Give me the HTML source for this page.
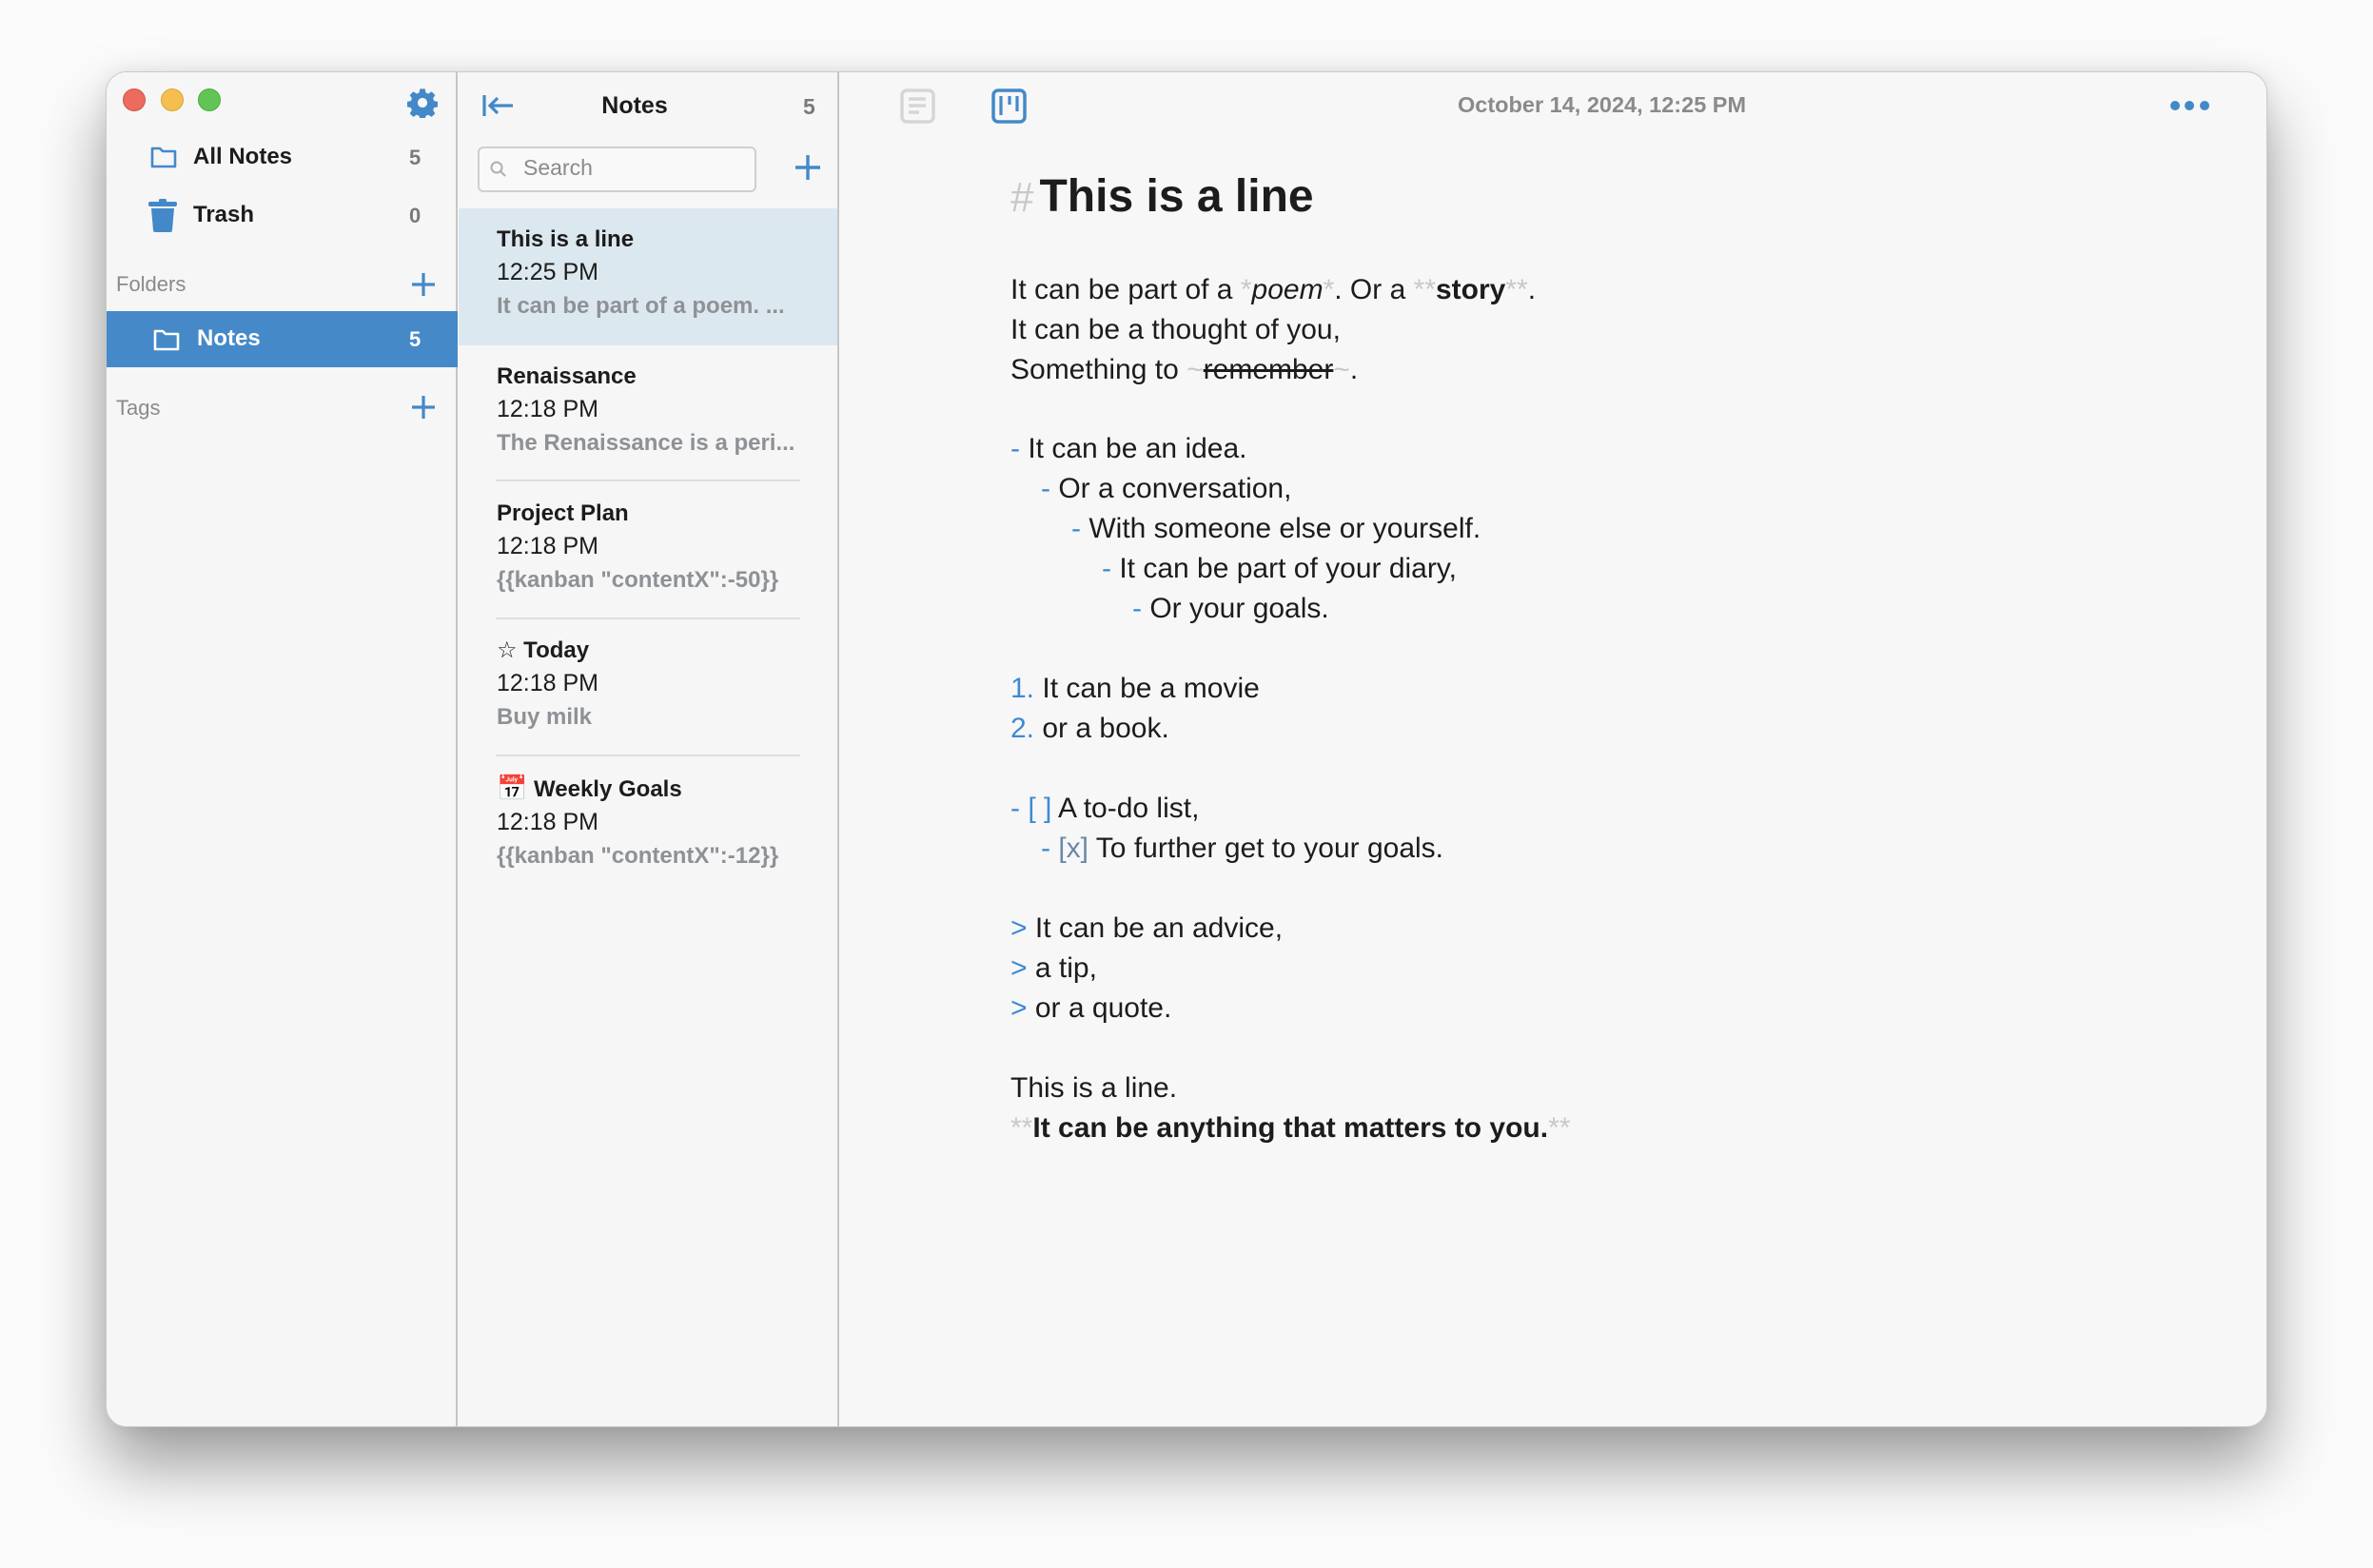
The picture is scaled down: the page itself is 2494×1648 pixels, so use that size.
<!DOCTYPE html>
<html><head><meta charset="utf-8">
<style>
*{margin:0;padding:0;box-sizing:border-box}
html,body{width:2494px;height:1648px;background:#fbfbfb;overflow:hidden;font-family:"Liberation Sans","DejaVu Sans",sans-serif}
.win{position:absolute;left:111px;top:75px;width:2272px;height:1425px;background:#f7f7f7;border-radius:22px;border:1px solid #c9c9c9;box-shadow:0 40px 70px rgba(0,0,0,.38),0 0 20px rgba(0,0,0,.08);overflow:hidden}
.abs{position:absolute;white-space:nowrap}
.side{position:absolute;left:0;top:0;width:369px;height:100%;background:#f6f6f6;border-right:2px solid #c6c6c6}
.list{position:absolute;left:370px;top:0;width:400px;height:100%;background:#f6f6f6;border-right:2px solid #c6c6c6}
.tl{position:absolute;top:17px;width:24px;height:24px;border-radius:50%}
.b{font-weight:bold}
.cnt{color:#7a7a7a;font-weight:bold;font-size:22px}
.it{position:absolute;left:40px;font-size:24px;line-height:35px;white-space:nowrap}
.it .t{font-weight:bold;color:#1c1c1c}
.it .tm{color:#1c1c1c;font-size:25px}
.it .p{color:#8e9196;font-weight:bold}
.sep{position:absolute;left:39px;width:320px;height:2px;background:#dedede}
.ed{position:absolute;left:950px;font-size:30px;color:#1c1c1c;white-space:nowrap;line-height:42px}
.bl{color:#3d8ad3}
.g{color:#c8c8c8}
</style></head><body>
<div class="win">
 <div class="side">
  <div class="tl" style="left:17px;background:#ec6a5e;border:1px solid #d25448"></div>
  <div class="tl" style="left:57px;background:#f4bf4f;border:1px solid #d9a53a"></div>
  <div class="tl" style="left:96px;background:#61c554;border:1px solid #4ea942"></div>
  <svg class="abs" style="left:316px;top:16px" width="32" height="32" viewBox="0 0 24 24"><path fill="#4389c9" d="M10 1h4l.6 3 2 .9 2.6-1.7 2.8 2.8-1.7 2.6.9 2 3 .6v4l-3 .6-.9 2 1.7 2.6-2.8 2.8-2.6-1.7-2 .9-.6 3h-4l-.6-3-2-.9-2.6 1.7-2.8-2.8 1.7-2.6-.9-2-3-.6v-4l3-.6.9-2-1.7-2.6 2.8-2.8 2.6 1.7 2-.9zM12 8.2a3.8 3.8 0 1 0 0 7.6 3.8 3.8 0 1 0 0-7.6z"/></svg>
  <svg class="abs" style="left:46px;top:77px" width="28" height="24" viewBox="0 0 28 24"><path d="M2 3h8l3 3h13v16H2z" fill="none" stroke="#4389c9" stroke-width="2.6" stroke-linejoin="round"/></svg>
  <div class="abs b" style="left:91px;top:75px;font-size:24px;color:#1c1c1c">All Notes</div>
  <div class="abs cnt" style="left:318px;top:77px">5</div>
  <svg class="abs" style="left:44px;top:133px" width="30" height="35" viewBox="0 0 30 35"><rect x="11" y="0" width="8" height="4" rx="1.5" fill="#4389c9"/><rect x="0" y="3" width="30" height="5" rx="2" fill="#4389c9"/><path d="M3 10h24l-2 23q-.2 2-2 2H7q-1.8 0-2-2z" fill="#4389c9"/></svg>
  <div class="abs b" style="left:91px;top:136px;font-size:24px;color:#1c1c1c">Trash</div>
  <div class="abs cnt" style="left:318px;top:138px">0</div>
  <div class="abs" style="left:10px;top:210px;font-size:22px;color:#8a8a8a">Folders</div>
  <svg class="abs" style="left:319px;top:209px" width="28" height="28" viewBox="0 0 28 28"><path d="M14 2v24M2 14h24" stroke="#4389c9" stroke-width="3.2"/></svg>
  <div class="abs" style="left:0;top:251px;width:369px;height:59px;background:#4589c8"></div>
  <svg class="abs" style="left:49px;top:269px" width="28" height="24" viewBox="0 0 28 24"><path d="M2 3h8l3 3h13v16H2z" fill="none" stroke="#fff" stroke-width="2.6" stroke-linejoin="round"/></svg>
  <div class="abs b" style="left:95px;top:266px;font-size:24px;color:#fff">Notes</div>
  <div class="abs b" style="left:318px;top:268px;font-size:22px;color:#fff">5</div>
  <div class="abs" style="left:10px;top:340px;font-size:22px;color:#8a8a8a">Tags</div>
  <svg class="abs" style="left:319px;top:338px" width="28" height="28" viewBox="0 0 28 28"><path d="M14 2v24M2 14h24" stroke="#4389c9" stroke-width="3.2"/></svg>
 </div>
 <div class="list">
  <svg class="abs" style="left:24px;top:23px" width="34" height="24" viewBox="0 0 34 24"><path d="M3 1v22M9 12h24M17 4l-8 8 8 8" fill="none" stroke="#4389c9" stroke-width="3.2"/></svg>
  <div class="abs b" style="left:0;width:370px;text-align:center;top:21px;font-size:25px;color:#1c1c1c">Notes</div>
  <div class="abs" style="left:362px;top:23px;font-size:23px;font-weight:bold;color:#7a7a7a">5</div>
  <div class="abs" style="left:20px;top:78px;width:293px;height:48px;border:2px solid #cfcfcf;border-radius:6px;background:#f9f9f9"></div>
  <svg class="abs" style="left:32px;top:92px" width="20" height="20" viewBox="0 0 20 20"><circle cx="8" cy="8" r="5.5" fill="none" stroke="#b0b0b0" stroke-width="2"/><path d="M12 12l5 5" stroke="#b0b0b0" stroke-width="2"/></svg>
  <div class="abs" style="left:68px;top:87px;font-size:23px;color:#8a8a8a">Search</div>
  <svg class="abs" style="left:352px;top:85px" width="30" height="30" viewBox="0 0 30 30"><path d="M15 2v26M2 15h26" stroke="#4389c9" stroke-width="3.4"/></svg>
  <div class="abs" style="left:0;top:143px;width:398px;height:144px;background:#dce8ef"></div>
  <div class="it" style="top:158px"><div class="t">This is a line</div><div class="tm">12:25 PM</div><div class="p">It can be part of a poem. ...</div></div>
  <div class="it" style="top:302px"><div class="t">Renaissance</div><div class="tm">12:18 PM</div><div class="p">The Renaissance is a peri...</div></div>
  <div class="sep" style="top:428px"></div>
  <div class="it" style="top:446px"><div class="t">Project Plan</div><div class="tm">12:18 PM</div><div class="p">{{kanban "contentX":-50}}</div></div>
  <div class="sep" style="top:573px"></div>
  <div class="it" style="top:590px"><div class="t"><span style="font-weight:normal">☆</span> Today</div><div class="tm">12:18 PM</div><div class="p">Buy milk</div></div>
  <div class="sep" style="top:717px"></div>
  <div class="it" style="top:735px"><div class="t"><span style="font-weight:normal;font-size:26px">📅</span> Weekly Goals</div><div class="tm">12:18 PM</div><div class="p">{{kanban "contentX":-12}}</div></div>
 </div>
 <svg class="abs" style="left:834px;top:17px" width="37" height="37" viewBox="0 0 37 37"><rect x="2" y="2" width="33" height="33" rx="5" fill="none" stroke="#d6d6d6" stroke-width="3.5"/><path d="M9 11h18M9 18h18M9 25h11" stroke="#d6d6d6" stroke-width="3.5"/></svg>
 <svg class="abs" style="left:930px;top:17px" width="37" height="37" viewBox="0 0 37 37"><rect x="2" y="2" width="33" height="33" rx="5" fill="none" stroke="#4389c9" stroke-width="3.5"/><path d="M10 8v20M19 8v9M27 8v16" stroke="#4389c9" stroke-width="3.2"/></svg>
 <div class="abs b" style="left:1420px;width:300px;text-align:center;top:21px;font-size:23.5px;color:#8a8a8a">October 14, 2024, 12:25 PM</div>
 <svg class="abs" style="left:2168px;top:29px" width="44" height="12" viewBox="0 0 44 12"><circle cx="6" cy="6" r="5" fill="#4389c9"/><circle cx="21" cy="6" r="5" fill="#4389c9"/><circle cx="37" cy="6" r="5" fill="#4389c9"/></svg>
 <div class="ed b" style="top:98px;font-size:48px;line-height:66px"><span class="g" style="font-weight:normal;font-size:44px;margin-right:6px">#</span>This is a line</div>
 <div class="ed" style="top:208px">It can be part of a <span class="g">*</span><i>poem</i><span class="g">*</span>. Or a <span class="g">**</span><b>story</b><span class="g">**</span>.</div>
 <div class="ed" style="top:250px">It can be a thought of you,</div>
 <div class="ed" style="top:292px">Something to <span class="g">~</span><s>remember</s><span class="g">~</span>.</div>
 <div class="ed" style="top:375px"><span class="bl">-</span> It can be an idea.</div>
 <div class="ed" style="top:417px;left:982px"><span class="bl">-</span> Or a conversation,</div>
 <div class="ed" style="top:459px;left:1014px"><span class="bl">-</span> With someone else or yourself.</div>
 <div class="ed" style="top:501px;left:1046px"><span class="bl">-</span> It can be part of your diary,</div>
 <div class="ed" style="top:543px;left:1078px"><span class="bl">-</span> Or your goals.</div>
 <div class="ed" style="top:627px"><span class="bl">1.</span> It can be a movie</div>
 <div class="ed" style="top:669px"><span class="bl">2.</span> or a book.</div>
 <div class="ed" style="top:753px"><span class="bl">- [ ]</span> A to-do list,</div>
 <div class="ed" style="top:795px;left:982px"><span class="bl">-</span> <span style="color:#6a88a8">[x]</span> To further get to your goals.</div>
 <div class="ed" style="top:879px"><span class="bl">&gt;</span> It can be an advice,</div>
 <div class="ed" style="top:921px"><span class="bl">&gt;</span> a tip,</div>
 <div class="ed" style="top:963px"><span class="bl">&gt;</span> or a quote.</div>
 <div class="ed" style="top:1047px">This is a line.</div>
 <div class="ed" style="top:1089px"><span class="g">**</span><b>It can be anything that matters to you.</b><span class="g">**</span></div>
</div>
</body></html>
